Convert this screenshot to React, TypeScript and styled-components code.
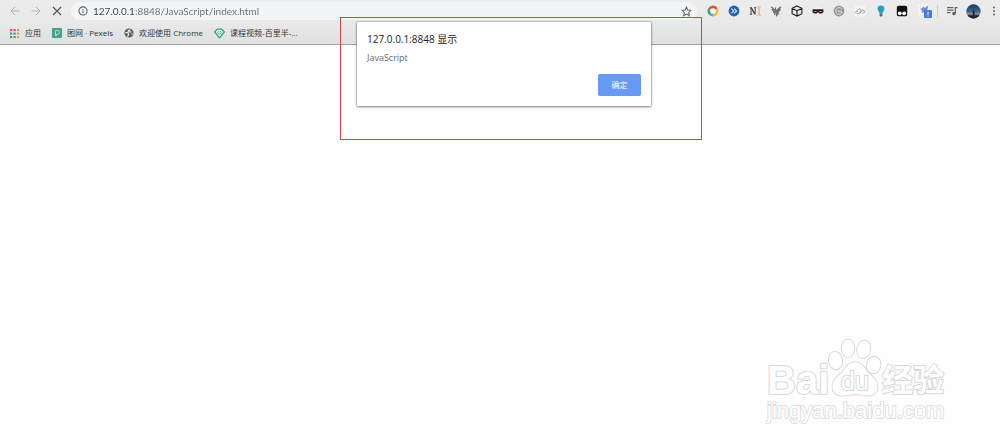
import React from "react";
import styled, { createGlobalStyle } from "styled-components";

const uiFont = `"Open Sans", "Noto Sans CJK SC", sans-serif`;

const GlobalStyle = createGlobalStyle`
  * { box-sizing: border-box; }
  body { margin: 0; background: #fefefe; font-family: ${uiFont}; }
`;

const Page = styled.div`
  position: relative;
  min-height: 100vh;
  overflow: hidden;
`;

const Chrome = styled.header`
  display: flex;
  flex-direction: column;
  height: 45px;
  background: linear-gradient(#ececec, #e9e9e9 50%, #e0e0e0);
  border-bottom: 1px solid #a3a3a3;
`;

const Toolbar = styled.div`
  display: flex;
  align-items: center;
  height: 22px;
  padding-left: 4px;
`;

const IconButton = styled.button<{ $w?: number; $end?: boolean }>`
  display: flex;
  flex: none;
  align-items: center;
  justify-content: ${(p) => (p.$end ? "flex-end" : "center")};
  width: ${(p) => p.$w ?? 21}px;
  height: 20px;
  padding: 0;
  border: 0;
  background: none;
`;

const Nav = styled.nav`
  display: flex;
`;

const AddressBar = styled.form`
  display: flex;
  flex: 1;
  align-items: center;
  height: 18px;
  margin: 0 5px 0 4px;
  padding-left: 7px;
  border-radius: 9px;
  background: #f3f4f5;
`;

const AddressInput = styled.input`
  flex: 1;
  min-width: 0;
  height: 18px;
  margin-left: 5px;
  padding: 0;
  border: 0;
  outline: 0;
  background: linear-gradient(90deg, #3c3f43 41px, #6a6d71 41px);
  background-clip: text;
  -webkit-background-clip: text;
  color: transparent;
  caret-color: #333;
  font: 10px/18px Lato, sans-serif;
`;

const Separator = styled.span`
  width: 1px;
  height: 12px;
  margin: 0 3px 0 0;
  background: #cfcfcf;
`;

const Bookmarks = styled.nav`
  display: flex;
  align-items: center;
  gap: 11px;
  height: 22px;
  padding-left: 9px;
`;

const Bookmark = styled.a`
  display: flex;
  align-items: center;
  gap: 5px;
  color: #333;
  font-size: 8px;
  line-height: 12px;
  text-decoration: none;
  white-space: nowrap;
`;

const Highlight = styled.div`
  position: absolute;
  top: 17px;
  left: 340px;
  width: 362px;
  height: 123px;
  border: 1px solid #c4474b;
`;

const Dialog = styled.section`
  position: absolute;
  top: 22px;
  left: 357px;
  display: flex;
  flex-direction: column;
  width: 294px;
  padding: 9px 10px 10px;
  border-radius: 1px;
  background: #fff;
  box-shadow: 0 0 1px 1px rgba(0, 0, 0, 0.15), 0 1px 3px rgba(0, 0, 0, 0.4);
`;

const DialogTitle = styled.h1`
  margin: 0;
  color: #222;
  font-size: 10px;
  font-weight: 400;
  line-height: 16px;
`;

const DialogText = styled.p`
  margin: 4px 0 0;
  color: #6b6b6b;
  font-size: 9px;
  line-height: 14px;
`;

const Confirm = styled.button`
  align-self: flex-end;
  width: 43px;
  height: 22px;
  margin-top: 9px;
  padding: 0;
  border: 0;
  border-radius: 2px;
  background: #669af5;
  color: #fff;
  font: 8px/22px ${uiFont};
`;

const Watermark = styled.svg`
  position: absolute;
  top: 330px;
  right: 0;
  width: 250px;
  height: 116px;
  fill: #fff;
  stroke: #d8d8d8;
  stroke-width: 2px;
  stroke-linejoin: round;
  paint-order: stroke;
  font-family: "Liberation Sans", "Noto Sans CJK SC", sans-serif;
`;

const WatermarkUrl = styled.text`
  font-size: 22px;
  stroke: #dfdfdf;
`;

type IconProps = { children: React.ReactNode; size?: number; color?: string; sw?: number };
const Icon = ({ children, size = 12, color = "#5f6368", sw = 1 }: IconProps) => (
  <svg width={size} height={size} viewBox="0 0 12 12" fill="none" stroke={color} strokeWidth={sw} aria-hidden="true">
    {children}
  </svg>
);

const extensions: { name: string; icon: React.ReactNode }[] = [
  {
    name: "Color ring",
    icon: (
      <Icon sw={2.6}>
        <circle cx="6" cy="6" r="4.1" fill="#fff" stroke="none" />
        <path d="M2.4 4A4.1 4.1 0 0 1 9.6 4" stroke="#dc5044" />
        <path d="M9.6 4A4.1 4.1 0 0 1 6 10.1" stroke="#f0bd38" />
        <path d="M6 10.1A4.1 4.1 0 0 1 3 8.8" stroke="#5b9bd8" />
        <path d="M3.2 9A4.1 4.1 0 0 1 2.4 4" stroke="#3da35c" />
      </Icon>
    ),
  },
  {
    name: "Fast forward",
    icon: (
      <Icon color="#d5e6fa" sw={1.1}>
        <circle cx="6" cy="6" r="5.4" fill="#1e63b8" stroke="none" />
        <path d="M3.4 3.6 5.8 6 3.4 8.4M6.2 3.6 8.6 6 6.2 8.4" />
      </Icon>
    ),
  },
  {
    name: "Text cursor",
    icon: (
      <Icon color="#4a4a4a" sw={1}>
        <path d="M.8 2.7h1.8M.8 9.3h2.4M2 2.7v6.6M5 2.7h2.2M6.2 2.7v6.6" />
        <path d="M2.2 2.8 6 9.2" strokeWidth="1.5" />
        <path d="M8.3 1.7h1l.7.7.7-.7h1M10 2.4v7.2M8.3 10.3h1l.7-.7.7.7h1" stroke="#e59a72" />
      </Icon>
    ),
  },
  {
    name: "Feather",
    icon: (
      <Icon color="#707070" sw={1.3}>
        <path d="M1.2 1.8 5 5.4M1.6 4.2l3.8 3.2-1 2.6M3 7l3 .4M5.4 2.4v4L10.8 1.8 7.4 6.6M6.6 5v5.4l2.4-2.6M6.6 8l4-3.4" />
      </Icon>
    ),
  },
  {
    name: "Cube",
    icon: (
      <Icon color="#1c1c1c" sw={1.1}>
        <path d="M6 .9 10.9 3.3v5.4L6 11.1 1.1 8.7V3.3zM1.1 3.3 6 5.7l4.9-2.4M6 5.7v5.4" />
      </Icon>
    ),
  },
  {
    name: "Mask",
    icon: (
      <Icon sw={1}>
        <path d="M2 3.5Q6 .8 10 3.5v4Q6 11 2 7.5z" fill="#f6f6f6" stroke="none" />
        <path d="M.6 4.2h10.8v3L9.9 8.6H7.4L6 7.3 4.6 8.6H2.1L.6 7.2z" fill="#33191f" stroke="none" />
        <path d="M2.4 6.5h2.2M7.4 6.5h2.2" stroke="#c98f96" />
      </Icon>
    ),
  },
  {
    name: "Spiral",
    icon: (
      <Icon color="#e4e4e4" sw={0.9}>
        <circle cx="6" cy="6" r="5.4" fill="#989898" stroke="none" />
        <path d="M8.8 4A3.4 3.4 0 1 0 9.3 7M4.6 5l1.3 1.8L7.5 5.2M6 6.8h3.2" />
      </Icon>
    ),
  },
  {
    name: "Links",
    icon: (
      <Icon color="#9b9b9b" sw={1}>
        <rect x=".6" y=".6" width="10.8" height="10.8" rx="1" fill="#f5f5f5" stroke="none" />
        <path d="M2 8.4C1 6.5 2.8 5.6 4 6.5M3.2 8.7c2.4.2 3-1.4 3.6-3.2C7.4 3.3 4.6 3 4.3 5M5.8 8.4l2.4-3.2c1.2-.8 2.6.6 2.2 1.9-.4 1.2-1.8 1.5-2.4.6" />
      </Icon>
    ),
  },
  {
    name: "Light bulb",
    icon: (
      <Icon>
        <path d="M6 .6a3.4 3.4 0 0 0-3.4 3.4c0 1.5 1.4 2.3 1.7 3.9h3.4c.3-1.6 1.7-2.4 1.7-3.9A3.4 3.4 0 0 0 6 .6z" fill="#1fa3c8" stroke="none" />
        <path d="M4.6 8.3h2.8v2.2l-.8.9H5.4l-.8-.9z" fill="#4d6d78" stroke="none" />
      </Icon>
    ),
  },
  {
    name: "Script manager",
    icon: (
      <Icon>
        <path d="M2.8.8h6.4a2 2 0 0 1 2 2v6.8a1.6 1.6 0 0 1-1.6 1.6H2.4A1.6 1.6 0 0 1 .8 9.6V2.8a2 2 0 0 1 2-2z" fill="#111" stroke="none" />
        <circle cx="3.8" cy="8.3" r="1.9" fill="#fff" stroke="none" />
        <circle cx="8.2" cy="8.3" r="1.9" fill="#fff" stroke="none" />
      </Icon>
    ),
  },
];

const appDots = ["#d9534a", "#d9534a", "#e2a04a", "#46a567", "#4c83d4", "#e2a04a", "#46a567", "#46a567", "#e2a04a"];

export default function App() {
  return (
    <Page>
      <GlobalStyle />
      <Chrome>
        <Toolbar>
          <Nav aria-label="Navigation">
            <IconButton aria-label="Back">
              <Icon color="#b0b0b0"><path d="M10.5 6H2M6 2 2 6l4 4" /></Icon>
            </IconButton>
            <IconButton aria-label="Forward">
              <Icon color="#b0b0b0"><path d="M1.5 6H10M6 2l4 4-4 4" /></Icon>
            </IconButton>
            <IconButton aria-label="Stop">
              <Icon color="#55585c" sw={1.2}><path d="m2 2 8 8M10 2l-8 8" /></Icon>
            </IconButton>
          </Nav>
          <AddressBar onSubmit={(e) => e.preventDefault()}>
            <Icon size={10} sw={1.3}>
              <circle cx="6" cy="6" r="4.9" />
              <path d="M6 5.3v3.4M6 3.2v1.2" />
            </Icon>
            <AddressInput aria-label="Address" defaultValue="127.0.0.1:8848/JavaScript/index.html" />
            <IconButton type="button" aria-label="Bookmark this page">
              <Icon size={11} sw={1.1}>
                <path d="m6 1.2 1.4 3.2 3.5.3-2.6 2.3.8 3.5L6 8.7l-3.1 1.8.8-3.5L1.1 4.7l3.5-.3z" />
              </Icon>
            </IconButton>
          </AddressBar>
          {extensions.map((e) => (
            <IconButton key={e.name} aria-label={e.name}>{e.icon}</IconButton>
          ))}
          <IconButton $w={25} aria-label="Translate">
            <svg width="16" height="16" viewBox="0 0 16 16" aria-hidden="true">
              <path d="M1 1h11v11H1z" fill="#f3f3f6" />
              <path d="m2 4 3 1.5 1-2 2 1.5 3.5-3-1 4-2 3-4 1 1-2-2-1 1-1z" fill="#7189d8" />
              <rect x="7" y="7" width="8" height="8" rx="1" fill="#4778dc" />
              <path d="M11 8.8v3M11 12.6v1" stroke="#fff" />
            </svg>
          </IconButton>
          <Separator />
          <IconButton $w={22} aria-label="Media playlist">
            <Icon sw={1.2}>
              <path d="M1 2.6h6.5M1 5.1h6.5M1 7.6h3.6M9.3 8.5V2.6h2.2" />
              <circle cx="8" cy="8.5" r="1.2" fill="#5f6368" />
            </Icon>
          </IconButton>
          <IconButton aria-label="Profile">
            <svg width="15" height="15" viewBox="0 0 15 15" aria-hidden="true">
              <defs>
                <linearGradient id="sky" x1="0" y1="0" x2="0" y2="1">
                  <stop offset="0" stopColor="#17345f" />
                  <stop offset=".5" stopColor="#3c648f" />
                  <stop offset=".68" stopColor="#a38d92" />
                  <stop offset=".8" stopColor="#202332" />
                </linearGradient>
              </defs>
              <circle cx="7.5" cy="7.5" r="7.2" fill="url(#sky)" />
              <path d="M6.8 6.6h1.6v5H6.8z" fill="#141a29" />
            </svg>
          </IconButton>
          <IconButton $w={16} $end aria-label="Menu">
            <Icon>
              <g fill="#5f6368" stroke="none">
                <circle cx="6" cy="2.4" r="1" />
                <circle cx="6" cy="6" r="1" />
                <circle cx="6" cy="9.6" r="1" />
              </g>
            </Icon>
          </IconButton>
        </Toolbar>
        <Bookmarks aria-label="Bookmarks">
          <Bookmark href="#apps">
            <svg width="11" height="11" viewBox="0 0 11 11" aria-hidden="true">
              {appDots.map((c, i) => (
                <rect key={i} x={1 + (i % 3) * 3.5} y={1 + Math.floor(i / 3) * 3.5} width="2.2" height="2.2" fill={c} />
              ))}
            </svg>
            应用
          </Bookmark>
          <Bookmark href="#pexels">
            <svg width="10" height="10" viewBox="0 0 10 10" aria-hidden="true">
              <rect width="10" height="10" rx="1" fill="#3fa28f" />
              <path d="M3.5 2.5h2a1.8 1.8 0 0 1 0 3.8h-1v1.4h-1z" fill="none" stroke="#bfe6dd" strokeWidth=".9" />
            </svg>
            图网 · Pexels
          </Bookmark>
          <Bookmark href="#welcome">
            <svg width="10" height="10" viewBox="0 0 10 10" aria-hidden="true">
              <circle cx="5" cy="5" r="4.6" fill="#5a5d61" />
              <path d="M1.3 4.6h1.9l1.4 1.2V7l-.8.7v1.2M5.8 1.3v1.2H4.3v1.4h2.9M8.8 6H7.2" fill="none" stroke="#e6e6e6" strokeWidth="1.1" />
            </svg>
            欢迎使用 Chrome
          </Bookmark>
          <Bookmark href="#course">
            <svg width="11" height="11" viewBox="0 0 11 11" aria-hidden="true">
              <path d="M3.2 1.2h4.6L10.3 4 5.5 9.8.7 4z" fill="#dff3ea" stroke="#2fa57b" strokeWidth="1.3" strokeLinejoin="round" />
              <path d="M3.4 4.2q2.1 3.6 4.2 0M4 3.4h.8M6.2 3.4H7" fill="none" stroke="#2fa57b" strokeWidth=".9" />
            </svg>
            课程视频-百里半-...
          </Bookmark>
        </Bookmarks>
      </Chrome>
      <Watermark aria-hidden="true">
        <text x="17" y="64" fontSize="40" fontWeight="700">Bai</text>
        <ellipse cx="85.5" cy="30.5" rx="6.6" ry="8.6" transform="rotate(-8 85.5 30.5)" />
        <ellipse cx="98" cy="18.3" rx="6.2" ry="8.8" />
        <ellipse cx="113.7" cy="19.3" rx="6.4" ry="8.8" transform="rotate(12 113.7 19.3)" />
        <ellipse cx="123.6" cy="35" rx="6.8" ry="8.3" transform="rotate(12 123.6 35)" />
        <path d="M105 32.5C99 32.5 96.5 36 93.5 40.5C90 45 82.5 49 82.5 56.5C82.5 62 86 65.5 91.5 65.5C97 65.5 100 64.2 105 64.2S113 65.5 118.5 65.5C124 65.5 127.5 62 127.5 56.5C127.5 49 120 45 116.5 40.5C113.5 36 111 32.5 105 32.5Z" />
        <text x="91" y="60" fontSize="25">du</text>
        <text x="132" y="61" fontSize="31" fontWeight="700">经验</text>
        <WatermarkUrl x="17" y="88">jingyan.baidu.com</WatermarkUrl>
      </Watermark>
      <Highlight />
      <Dialog role="alertdialog" aria-labelledby="dialog-title">
        <DialogTitle id="dialog-title">127.0.0.1:8848 显示</DialogTitle>
        <DialogText>JavaScript</DialogText>
        <Confirm>确定</Confirm>
      </Dialog>
    </Page>
  );
}
